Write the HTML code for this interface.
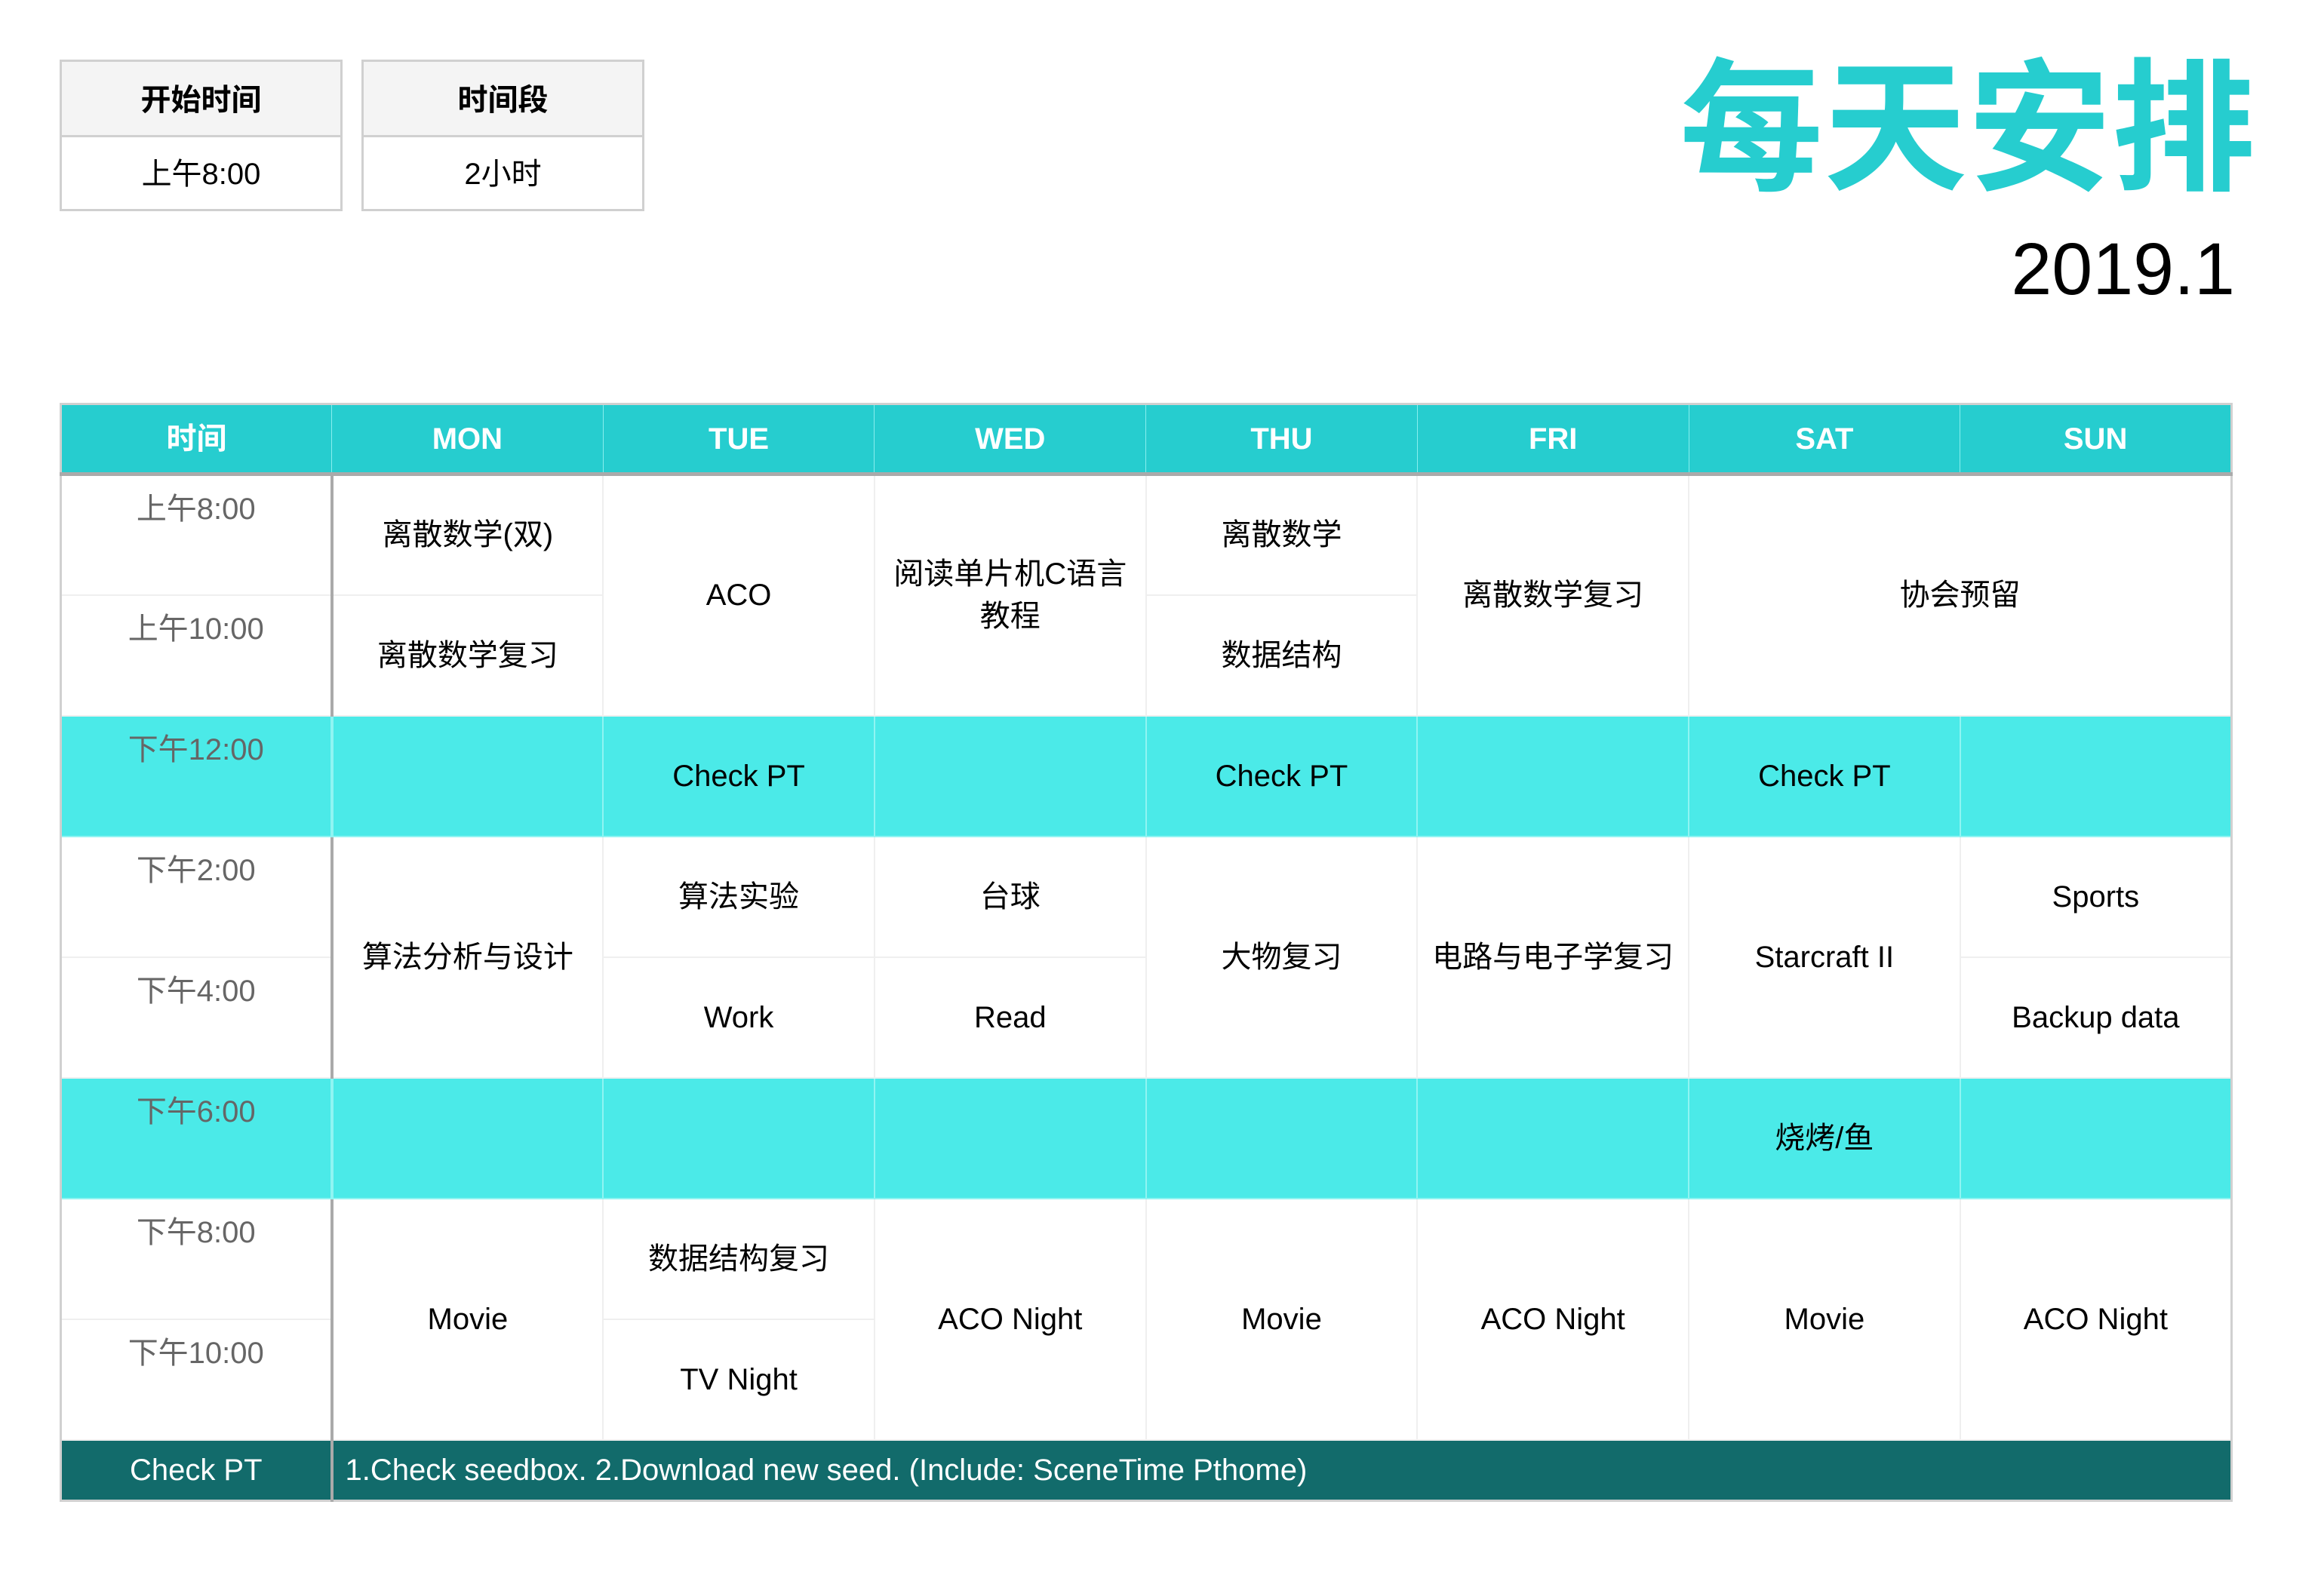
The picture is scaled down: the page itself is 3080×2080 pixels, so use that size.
<!DOCTYPE html>
<html><head><meta charset="utf-8"><style>
*{margin:0;padding:0;box-sizing:border-box}
body{width:3080px;height:2080px;background:#fff;position:relative;overflow:hidden;font-family:"Liberation Sans","Noto Sans CJK SC",sans-serif;color:#000}
.box{position:absolute;top:79px;width:375px;height:201px;border:3px solid #d0d0d0;}
.box .h{height:100px;background:#f4f4f4;border-bottom:3px solid #d0d0d0;font-weight:bold;font-size:40px;line-height:103px;text-align:center}
.box .v{height:95px;font-size:40px;line-height:99px;text-align:center}
.title{position:absolute;left:2226px;top:62px;font-size:190px;font-weight:bold;color:#26cdcf;letter-spacing:1px;line-height:220px;white-space:nowrap}
.date{position:absolute;right:118px;top:292px;font-size:97px;line-height:130px;color:#000}
table{position:absolute;left:79px;top:534px;width:2880px;border-collapse:collapse;table-layout:fixed;border:3px solid #d0d0d0}
td{border:2px solid #efefef;text-align:center;vertical-align:middle;font-size:40px;line-height:56px;padding:0 6px}
tr.hd td{background:#26cdcf;color:#fff;font-weight:bold;height:93px;border:1px solid #8ee;border-bottom:5px solid #aaa}
tr.r td{height:160px}
tr.hl td{background:#4beae8;border-color:#8ff4f2}
td.t{color:#666;vertical-align:top;padding-top:16px;border-right:4px solid #aaa}
tr.ft td{background:#126b6b;color:#fff;height:81px;border-color:#126b6b}
tr.ft td.t{color:#fff;vertical-align:middle;padding-top:0;border-right:4px solid #aaa}
td.l{text-align:left;padding-left:16px}
</style></head><body>
<div class="box" style="left:79px"><div class="h">开始时间</div><div class="v">上午8:00</div></div>
<div class="box" style="left:479px"><div class="h">时间段</div><div class="v">2小时</div></div>
<div class="title">每天安排</div>
<div class="date">2019.1</div>
<table>
<colgroup><col style="width:359px"><col><col><col><col><col><col><col></colgroup>
<tr class="hd"><td>时间</td><td>MON</td><td>TUE</td><td>WED</td><td>THU</td><td>FRI</td><td>SAT</td><td>SUN</td></tr>
<tr class="r"><td class="t">上午8:00</td><td>离散数学(双)</td><td rowspan="2">ACO</td><td rowspan="2" style="padding:0 20px">阅读单片机C语言教程</td><td>离散数学</td><td rowspan="2">离散数学复习</td><td rowspan="2" colspan="2">协会预留</td></tr>
<tr class="r"><td class="t">上午10:00</td><td>离散数学复习</td><td>数据结构</td></tr>
<tr class="r hl"><td class="t">下午12:00</td><td></td><td>Check PT</td><td></td><td>Check PT</td><td></td><td>Check PT</td><td></td></tr>
<tr class="r"><td class="t">下午2:00</td><td rowspan="2">算法分析与设计</td><td>算法实验</td><td>台球</td><td rowspan="2">大物复习</td><td rowspan="2" style="white-space:nowrap">电路与电子学复习</td><td rowspan="2">Starcraft II</td><td>Sports</td></tr>
<tr class="r"><td class="t">下午4:00</td><td>Work</td><td>Read</td><td>Backup data</td></tr>
<tr class="r hl"><td class="t">下午6:00</td><td></td><td></td><td></td><td></td><td></td><td>烧烤/鱼</td><td></td></tr>
<tr class="r"><td class="t">下午8:00</td><td rowspan="2">Movie</td><td>数据结构复习</td><td rowspan="2">ACO Night</td><td rowspan="2">Movie</td><td rowspan="2">ACO Night</td><td rowspan="2">Movie</td><td rowspan="2">ACO Night</td></tr>
<tr class="r"><td class="t">下午10:00</td><td>TV Night</td></tr>
<tr class="ft"><td class="t">Check PT</td><td colspan="7" class="l">1.Check seedbox. 2.Download new seed. (Include: SceneTime Pthome)</td></tr>
</table>
</body></html>
